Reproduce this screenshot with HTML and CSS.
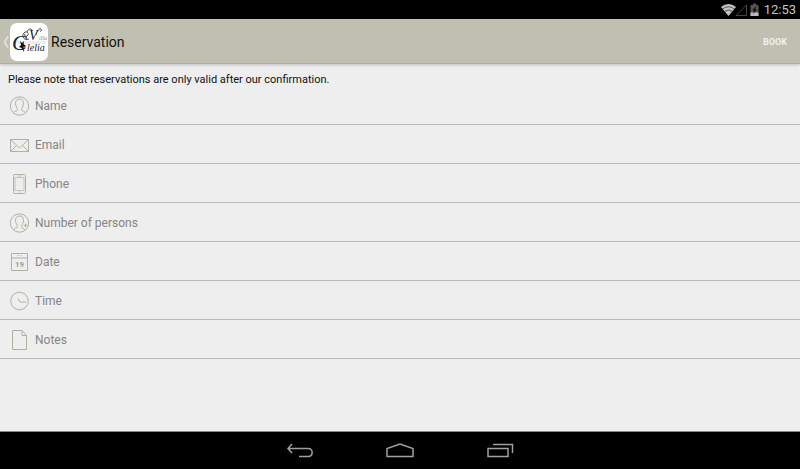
FILE: index.html
```html
<!DOCTYPE html>
<html lang="en">
<head>
  <meta charset="UTF-8" />
  <meta name="viewport" content="width=device-width, initial-scale=1.0" />
  <title>Reservation</title>
  <link rel="stylesheet" href="styles.css">
</head>
<body>
  <div class="status-bar">
    <svg width="38" height="14" viewBox="0 0 38 14">
      <path d="M0 4Q7.500 -2 15 4L7.500 13Z" fill="#c4c4c4"/>
      <path d="M1.500 6Q7.500 1.500 13.500 6M3.500 8.500Q7.500 5.500 11.500 8.500" fill="none" stroke="#333" stroke-width="0.8"/>
      <path d="M15 12.500H25.500V2Z" fill="none" stroke="#484848"/>
      <path d="M30 2H32V0.500H35V2H37.500V13H29.500V2Z" fill="#555"/>
      <path d="M29.500 9.500H37.500V13H29.500Z" fill="#bbb"/>
      <path d="M35 3L31.500 7.500H33.500L32 11L36 6.500H34Z" fill="#050505"/>
    </svg>
    <span class="clock">12:53</span>
  </div>

  <form class="screen">
    <header class="action-bar">
      <a class="up" href="#" aria-label="Back">
        <svg class="chevron" width="6" height="14" viewBox="0 0 6 14"><path d="M5 1.500L1.500 7L5 12.500" fill="none" stroke="#e2e2da" stroke-width="1.600"/></svg>
        <svg class="logo" width="38" height="38" viewBox="0 0 38 38">
          <rect width="38" height="38" rx="7" fill="#fff"/>
          <path d="M3 18H36V21H3Z" fill="#eee"/>
          <g fill="#222" font-family="'Liberation Serif', serif" font-style="italic">
            <text x="2" y="27" font-size="22">C</text>
            <text x="19" y="17" font-size="14">V</text>
            <text x="29" y="17" font-size="6" fill="#888">illa</text>
            <text x="17" y="28" font-size="10">lelia</text>
          </g>
          <path d="M19 16C14 18 11 13 14 10C17 7 20 11 17 13C15 14 14 12 15 11M17 9C18 5 22 5 22 8M26 12C27 8 29 5 31 6C32 7 31 9 30 8" fill="none" stroke="#333" stroke-width="0.9"/>
          <path d="M10 18L12 20L14 18L13.500 21L16 23L13.500 24L14 29L11.500 25L9 24L11 22Z" fill="#111"/>
        </svg>
      </a>
      <h1>Reservation</h1>
      <button class="book" type="submit">BOOK</button>
    </header>

    <main>
      <p class="note">Please note that reservations are only valid after our confirmation.</p>

      <label class="field">
        <svg viewBox="0 0 20 20">
          <circle cx="9.500" cy="10" r="9.200"/>
          <path d="M3.500 16.500C4 15 7.500 15.500 7.500 13.500C7.500 12 5.500 10.500 5.500 7.500C5.500 4.500 7 3 9.500 3S13.500 4.500 13.500 7.500C13.500 10.500 11.500 12 11.500 13.500C11.500 15.500 15 15 15.500 16.500"/>
        </svg>
        <input type="text" name="name" placeholder="Name" aria-label="Name">
      </label>
      <label class="field">
        <svg viewBox="0 0 20 20">
          <path d="M0.500 4.500H18.500V16.500H0.500ZM0.500 4.500L9.500 13L18.500 4.500M0.500 16.500L6.500 10.500M18.500 16.500L12.500 10.500"/>
        </svg>
        <input type="email" name="email" placeholder="Email" aria-label="Email">
      </label>
      <label class="field">
        <svg viewBox="0 0 20 20">
          <rect x="3.500" y="0.500" width="12" height="19" rx="1"/>
          <path d="M5 3.500H14V16.500H5ZM7.500 2H11.500M8.500 18H10.500" stroke-width="0.7"/>
        </svg>
        <input type="tel" name="phone" placeholder="Phone" aria-label="Phone">
      </label>
      <label class="field">
        <svg viewBox="0 0 20 20">
          <circle cx="9.500" cy="10" r="9.200"/>
          <path d="M3.500 16.500C4 15 7.500 15.500 7.500 13.500C7.500 12 5.500 10.500 5.500 7.500C5.500 4.500 7 3 9.500 3S13.500 4.500 13.500 7.500C13.500 10.500 11.500 12 11.500 13.500C11.500 15.500 14 15 14.500 16.500M15.500 10.500V14M13.800 12.300H17.300"/>
        </svg>
        <input type="text" name="persons" placeholder="Number of persons" aria-label="Number of persons">
      </label>
      <label class="field">
        <svg viewBox="0 0 20 20">
          <path d="M1.500 1.500H17.500V18.500H1.500ZM1.500 6H17.500M7.500 3.500H8.500M10.500 3.500H11.500"/>
          <text x="5" y="15">19</text>
        </svg>
        <input type="text" name="date" placeholder="Date" aria-label="Date">
      </label>
      <label class="field">
        <svg viewBox="0 0 20 20">
          <circle cx="9.500" cy="10" r="8.800"/>
          <path d="M8 7.500L10 11H16"/>
        </svg>
        <input type="text" name="time" placeholder="Time" aria-label="Time">
      </label>
      <label class="field">
        <svg viewBox="0 0 20 20">
          <path d="M2.500 0.500H12L16.500 5.500V19.500H2.500ZM12 0.500V5.500H16.500"/>
        </svg>
        <input type="text" name="notes" placeholder="Notes" aria-label="Notes">
      </label>
    </main>
  </form>

  <nav class="nav-bar">
    <button type="button" aria-label="Back">
      <svg width="28" height="18" viewBox="0 0 28 18"><path d="M6 2L2 6.500L6 11M2 6.500H22C27.500 6.500 27.500 14.500 22 14.500H13"/></svg>
    </button>
    <button type="button" aria-label="Home">
      <svg width="28" height="18" viewBox="0 0 28 18"><path d="M1 14.500V6.500L14 2L27 6.500V14.500Z"/></svg>
    </button>
    <button type="button" aria-label="Recent apps">
      <svg width="28" height="18" viewBox="0 0 28 18"><path d="M2 6.500H22V14.500H2ZM7 2.500H26.500V11"/></svg>
    </button>
  </nav>
</body>
</html>
```
FILE: styles.css
```css
* {
  box-sizing: border-box;
}
body {
  margin: 0;
  min-height: 100vh;
  display: flex;
  flex-direction: column;
  font-family: Roboto, sans-serif;
  background: #eee;
  color: #111;
}
button {
  padding: 0;
  border: none;
  background: none;
  font-family: inherit;
  cursor: pointer;
}
.status-bar {
  display: flex;
  align-items: center;
  justify-content: flex-end;
  gap: 5px;
  height: 19px;
  padding-right: 4px;
  background: #000;
}
.clock {
  font-size: 13px;
  line-height: 19px;
  color: #c4c4c4;
}
.screen {
  flex: 1;
}
.action-bar {
  display: flex;
  align-items: center;
  height: 45px;
  padding: 1px 13px 0 3px;
  background: #c0c0b2;
  border-bottom: 1px solid #adada1;
  box-shadow: 0 1px 3px rgba(0, 0, 0, 0.2);
}
.up {
  display: flex;
  align-items: center;
  gap: 1px;
}
.action-bar h1 {
  flex: 1;
  margin: 0 0 0 3px;
  font-size: 14px;
  font-weight: 400;
}
.book {
  font-size: 9px;
  font-weight: 700;
  color: #f2f2ee;
}
.note {
  margin: 0;
  padding: 9px 8px 0;
  font-size: 11px;
  line-height: 13px;
}
.field {
  display: flex;
  align-items: center;
  gap: 5px;
  height: 39px;
  padding: 2px 0 0 10px;
  border-bottom: 1px solid #b9b9b9;
}
.field svg {
  width: 20px;
  height: 20px;
  fill: none;
  stroke: #b1b19f;
}
.field svg text {
  fill: #a3a391;
  stroke: none;
  font-size: 8px;
  font-weight: 700;
}
.field input {
  flex: 1;
  min-width: 0;
  padding: 0;
  border: none;
  outline: none;
  background: none;
  font-family: inherit;
  font-size: 12px;
  color: #111;
}
.field input::placeholder {
  color: #858585;
  opacity: 1;
}
.nav-bar {
  display: flex;
  align-items: center;
  justify-content: center;
  gap: 72px;
  height: 38px;
  background: #000;
  border-top: 1px solid #888;
}
.nav-bar svg {
  display: block;
  fill: none;
  stroke: #a0a0a0;
  stroke-width: 1.5;
}
```
